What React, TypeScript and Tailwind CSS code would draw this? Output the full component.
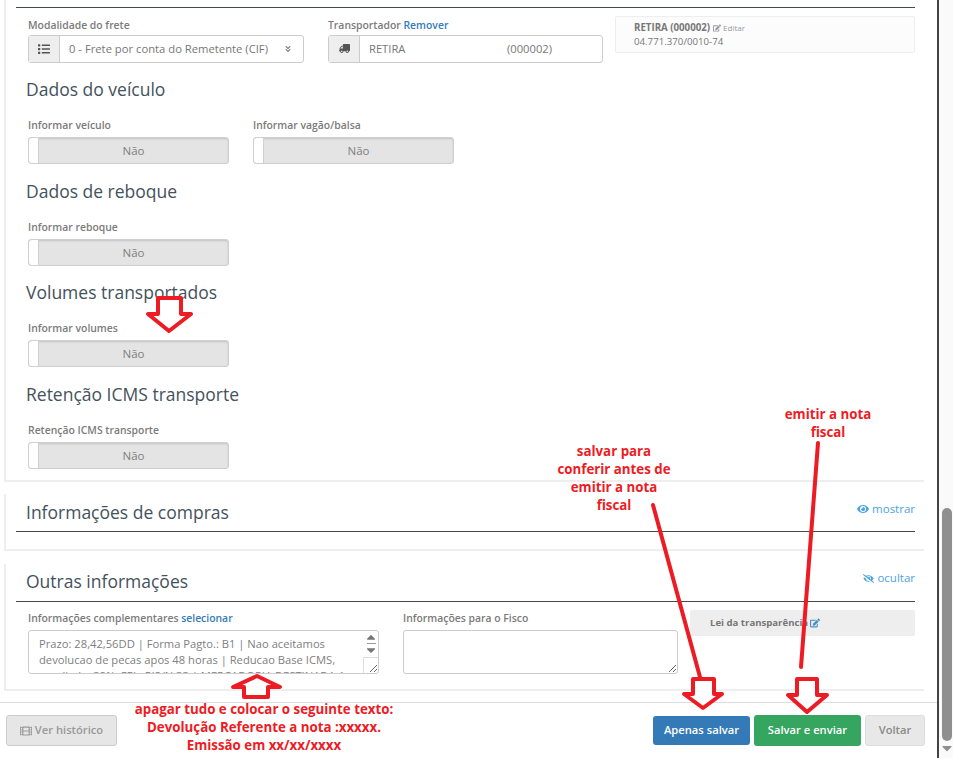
import React from 'react'
import { FaList, FaTruck, FaAngleDoubleDown, FaEdit, FaEye, FaEyeSlash, FaFilm, FaCaretUp, FaCaretDown } from 'react-icons/fa'

const FieldLabel: React.FC<{ children: React.ReactNode }> = ({ children }) => (
  <label className="block h-[14px] text-[10.4px] leading-[14px] font-semibold text-[#7b7b7b] whitespace-nowrap">{children}</label>
)

const Toggle: React.FC<{ label: string }> = ({ label }) => (
  <div className="w-[201px]">
    <FieldLabel>{label}</FieldLabel>
    <div className="mt-[5px] flex h-[27px] overflow-hidden rounded-[3px] border border-[#d0d0d0] bg-[#e4e4e4] shadow-[inset_0_1px_2px_rgba(0,0,0,0.15)]">
      <span className="w-[10px] shrink-0 rounded-l-[3px] border-r border-[#d0d0d0] bg-white" />
      <span className="flex-1 text-center text-[11.5px] leading-[25px] font-medium text-[#808080]">Não</span>
    </div>
  </div>
)

const FreightSection: React.FC<{ title: string; toggles: string[] }> = ({ title, toggles }) => (
  <section className="mt-[14.67px]">
    <h3 className="-ml-[2px] h-[24px] text-[17.5px] leading-[24px] text-[#44525c]">{title}</h3>
    <div className="mt-[17px] flex gap-[24px]">
      {toggles.map((t) => (
        <Toggle key={t} label={t} />
      ))}
    </div>
  </section>
)

const Arrow: React.FC<{ points: string }> = ({ points }) => (
  <polygon points={points} fill="#fff" stroke="#ed1c24" strokeWidth="4" strokeLinejoin="round" />
)

const Note: React.FC<{ className: string; children: React.ReactNode }> = ({ className, children }) => (
  <p className={`absolute text-center text-[13.3px] leading-[18px] font-bold text-[#ed1c24] whitespace-pre-line ${className}`}>{children}</p>
)

export default function App() {
  return (
    <div className="relative flex h-[758px] w-[953px] overflow-hidden bg-white font-['Open_Sans',sans-serif]">
      <main className="flex h-full w-[939px] shrink-0 flex-col border-r-2 border-[#444]">
        <div className="h-[702px] shrink-0 overflow-hidden pl-[4px]">
          {/* Transporte */}
          <div className="h-[482px] w-[920px] border-b-2 border-l-2 border-[#eee] pt-[7px] pr-[9px] pl-[10px]">
            <hr className="border-t border-[#3f4a52]" />
            <div className="pl-[12px]">
              <div className="flex items-start">
                <div className="mt-[10px] w-[276px]">
                  <FieldLabel>Modalidade do frete</FieldLabel>
                  <div className="mt-[3px] flex h-[27.5px] rounded-[3px] border border-[#ccc]">
                    <span className="flex w-[31px] items-center justify-center border-r border-[#ccc] bg-[#eee] text-[#555]">
                      <FaList size={12} />
                    </span>
                    <span className="flex flex-1 items-center justify-between pt-[1px] pr-[11px] pl-[9px] text-[11.25px] whitespace-nowrap text-[#777]">
                      0 - Frete por conta do Remetente (CIF)
                      <FaAngleDoubleDown size={8} className="text-[#888]" />
                    </span>
                  </div>
                </div>
                <div className="mt-[10px] ml-[24px] w-[275px]">
                  <FieldLabel>
                    Transportador <a className="text-[#337ab7]">Remover</a>
                  </FieldLabel>
                  <div className="mt-[3px] flex h-[27.5px] rounded-[3px] border border-[#ccc]">
                    <span className="flex w-[31px] items-center justify-center border-r border-[#ccc] bg-[#eee] text-[#555]">
                      <FaTruck size={11} className="-scale-x-100" />
                    </span>
                    <span className="flex flex-1 items-center justify-between pt-[1px] pr-[50px] pl-[9px] text-[11.2px] text-[#777]">
                      <span>RETIRA</span>
                      <span>(000002)</span>
                    </span>
                  </div>
                </div>
                <div className="mt-[8px] ml-[12px] h-[37px] w-[300px] rounded-[2px] border border-[#eee] bg-[#fcfcfc] pt-[4px] pl-[18px]">
                  <p className="flex items-center text-[9.7px] leading-[13px] font-bold text-[#777]">
                    RETIRA (000002)
                    <FaEdit size={8} className="ml-[3px] text-[#999]" />
                    <span className="ml-[2px] text-[8px] font-normal text-[#999]">Editar</span>
                  </p>
                  <p className="mt-[1px] text-[9.7px] leading-[13px] text-[#777]">04.771.370/0010-74</p>
                </div>
              </div>
              <FreightSection title="Dados do veículo" toggles={['Informar veículo', 'Informar vagão/balsa']} />
              <FreightSection title="Dados de reboque" toggles={['Informar reboque']} />
              <FreightSection title="Volumes transportados" toggles={['Informar volumes']} />
              <FreightSection title="Retenção ICMS transporte" toggles={['Retenção ICMS transporte']} />
            </div>
          </div>

          {/* Informações de compras */}
          <div className="mt-[12px] h-[57px] w-[920px] border-b-2 border-l-2 border-[#eee] pr-[9px] pl-[10px]">
            <div className="flex h-[38px] items-center justify-between border-b border-[#3f4a52]">
              <h3 className="-mt-[1px] pl-[10px] text-[17.5px] text-[#44525c]">Informações de compras</h3>
              <a className="-mt-[7px] flex items-center gap-[3px] text-[11.5px] text-[#4ba3e0]">
                <FaEye size={12} /> mostrar
              </a>
            </div>
          </div>

          {/* Outras informações */}
          <div className="mt-[13px] h-[127px] w-[920px] border-b-2 border-l-2 border-[#eee] pr-[9px] pl-[10px]">
            <div className="flex h-[38px] items-center justify-between border-b border-[#3f4a52]">
              <h3 className="-mt-[3px] pl-[10px] text-[17.5px] text-[#44525c]">Outras informações</h3>
              <a className="-mt-[9px] flex items-center gap-[3px] text-[11.5px] text-[#4ba3e0]">
                <FaEyeSlash size={11} /> ocultar
              </a>
            </div>
            <div className="flex items-start pl-[12px]">
              <div className="mt-[9px] w-[351px]">
                <FieldLabel>
                  Informações complementares <a className="text-[#337ab7]">selecionar</a>
                </FieldLabel>
                <div className="relative mt-[5px] h-[44px]">
                  <textarea
                    readOnly
                    value="Prazo: 28,42,56DD | Forma Pagto.: B1 | Nao aceitamos devolucao de pecas apos 48 horas | Reducao Base ICMS, ampliada: 38%, FEL, PIS/N 33 | MERCADORIA DESTINADA A"
                    className="block h-full w-full resize-y overflow-hidden rounded-[3px] border border-[#ccc] pt-[5px] pr-[18px] pl-[10px] text-[11.2px] leading-[16px] text-[#808080] outline-none"
                  />
                  <div className="pointer-events-none absolute top-[1px] right-[1px] flex h-[28px] w-[14px] flex-col items-center text-[#777]">
                    <FaCaretUp size={14} className="-my-[1px]" />
                    <span className="h-px w-[9px] bg-[#999]" />
                    <FaCaretDown size={14} className="-my-[1px]" />
                  </div>
                  <div className="pointer-events-none absolute right-[1px] bottom-[1px] h-[16px] w-[15px] border-t border-l border-[#ddd]" />
                </div>
              </div>
              <div className="mt-[9px] ml-[24px] w-[275px]">
                <FieldLabel>Informações para o Fisco</FieldLabel>
                <textarea
                  readOnly
                  className="mt-[5px] block h-[44px] w-full resize-y rounded-[3px] border border-[#ccc] outline-none"
                />
              </div>
              <div className="mt-[8px] ml-[12px] flex h-[26px] w-[225px] items-center rounded-[2px] bg-[#eee] pl-[20px] text-[9.6px] font-bold text-[#777]">
                Lei da transparência
                <FaEdit size={10} className="ml-[2px] text-[#4a90c8]" />
              </div>
            </div>
          </div>
        </div>

        {/* Rodapé */}
        <footer className="flex flex-1 items-start justify-between border-t border-[#ddd] pt-[12px] pr-[12px] pl-[6px]">
          <button className="flex h-[31px] w-[111px] items-center justify-center gap-[3px] rounded-[3px] border border-[#ccc] bg-[#e6e6e6] text-[11.2px] font-semibold text-[#999]">
            <FaFilm size={12} /> Ver histórico
          </button>
          <div className="flex items-center gap-[4px]">
            <button className="h-[29px] w-[97px] rounded-[3px] bg-[#337ab7] text-[11.2px] font-semibold text-white">Apenas salvar</button>
            <button className="h-[31px] w-[107px] rounded-[3px] bg-[#35a55f] text-[11.2px] font-semibold text-white">Salvar e enviar</button>
            <button className="h-[31px] w-[60px] rounded-[3px] border border-[#ddd] bg-[#e8e8e8] text-[11.2px] font-semibold text-[#8a8a8a]">Voltar</button>
          </div>
        </footer>
      </main>

      {/* Barra de rolagem */}
      <aside className="flex h-full flex-1 flex-col items-center bg-[#fafafa]">
        <div className="mt-[508px] h-[233px] w-[10px] rounded-full bg-[#8f8f8f]" />
        <FaCaretDown size={16} className="-mt-[1px] text-[#8f8f8f]" />
      </aside>

      {/* Anotações sobre a tela */}
      <svg className="pointer-events-none absolute inset-0" width="953" height="758">
        <Arrow points="158,298 181,298 181,314 191,314 169,331 148,314 158,314" />
        <Arrow points="257,676 280,687 268,687 268,697 244,697 244,687 233,687" />
        <line x1="653" y1="505" x2="700" y2="677" stroke="#ed1c24" strokeWidth="4" strokeLinecap="round" />
        <line x1="818" y1="443" x2="801" y2="667" stroke="#ed1c24" strokeWidth="4" strokeLinecap="round" />
        <Arrow points="693,679 714,679 714,694 722,694 703,708 684,694 693,694" />
        <Arrow points="797,679 817,679 817,695 827,695 807,712 788,695 797,695" />
      </svg>
      <Note className="top-[442px] left-[544px] w-[140px]">{'salvar para\nconferir antes de\nemitir a nota\nfiscal'}</Note>
      <Note className="top-[405px] left-[758px] w-[140px]">{'emitir a nota\nfiscal'}</Note>
      <Note className="top-[700px] left-[114px] w-[300px]">{'apagar tudo e colocar o seguinte texto:\nDevolução Referente a nota :xxxxx.\nEmissão em xx/xx/xxxx'}</Note>
    </div>
  )
}
